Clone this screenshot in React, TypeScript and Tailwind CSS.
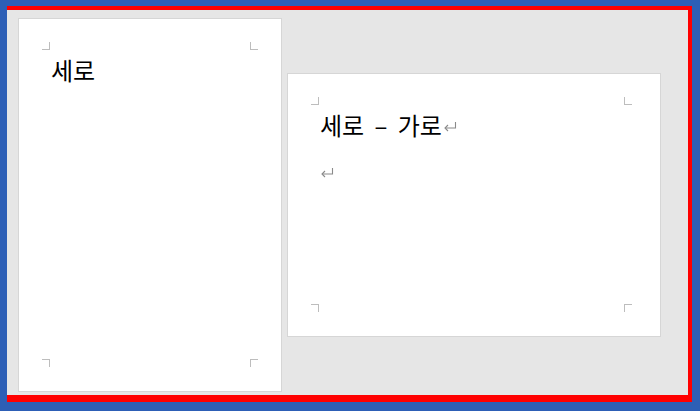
import type { ReactNode } from 'react';

const FONT = { fontFamily: '"Noto Sans CJK KR", "Noto Sans", sans-serif' };

type Corner = 'tl' | 'tr' | 'bl' | 'br';

// margin crop marks, drawn as two sides of a small box
const MARK_CLASS: Record<Corner, string> = {
  tl: 'border-b border-r',
  tr: 'border-b border-l',
  bl: 'border-t border-r',
  br: 'border-t border-l',
};

function Mark({ corner }: { corner: Corner }) {
  return <div className={`w-[8px] h-[8px] border-[#bdbdbd] ${MARK_CLASS[corner]}`} />;
}

function ReturnMark() {
  return (
    <svg width="14" height="12" viewBox="0 0 14 12" className="inline-block">
      <path d="M12.5 1 V7 H2" fill="none" stroke="#8a8a8a" strokeWidth="1.1" />
      <path d="M5 4 L2 7 L5 10" fill="none" stroke="#8a8a8a" strokeWidth="1.1" />
    </svg>
  );
}

function Page({ width, height, padRight, children }: { width: number; height: number; padRight: number; children: ReactNode }) {
  return (
    <div
      className="bg-white border border-[#d6d6d6] flex flex-col pl-[23px] pt-[23px] pb-[24px] shrink-0"
      style={{ width, height, paddingRight: padRight }}
    >
      <div className="flex justify-between">
        <Mark corner="tl" />
        <Mark corner="tr" />
      </div>
      <div className="flex-1 pl-[9px] pt-[6px]">{children}</div>
      <div className="flex justify-between">
        <Mark corner="bl" />
        <Mark corner="br" />
      </div>
    </div>
  );
}

export default function App() {
  return (
    <div className="w-[700px] h-[411px] bg-[#2d5fb6] pl-[7px] pt-[6px] pr-[8px] pb-[9px]" style={FONT}>
      <div className="h-full border-t-[4px] border-r-[4px] border-b-[7px] border-[#ff0000]">
        <div className="h-full bg-[#e6e6e6] flex items-start gap-[5px] pl-[11px] pt-[8px]">
          <Page width={264} height={374} padRight={23}>
            <div className="text-[24px] leading-[28px] text-black">세로</div>
          </Page>
          <div className="mt-[55px]">
            <Page width={374} height={264} padRight={28}>
              <div className="text-[24px] leading-[28px] text-black flex items-center">
                <span className="[word-spacing:5px]">세로 – 가로</span>
                <span className="ml-[1px] mt-[3px] flex">
                  <ReturnMark />
                </span>
              </div>
              <div className="mt-[28px] flex">
                <ReturnMark />
              </div>
            </Page>
          </div>
        </div>
      </div>
    </div>
  );
}
